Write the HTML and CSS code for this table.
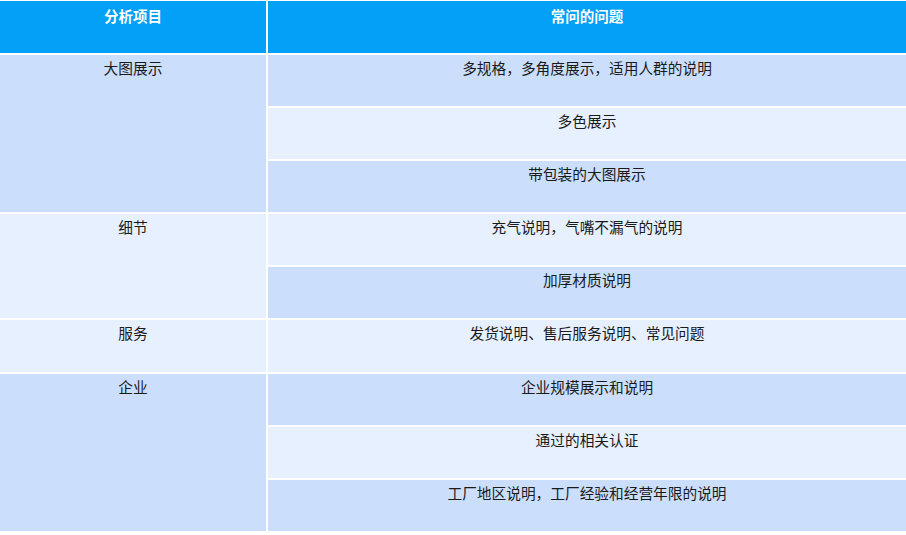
FILE: index.html
```html
<!DOCTYPE html>
<html lang="zh">
<head>
<meta charset="utf-8">
<title>分析项目</title>
<link rel="stylesheet" href="styles.css">
</head>
<body>
<div class="grid">
  <div class="cell head">分析项目</div>
  <div class="cell head">常问的问题</div>

  <div class="cell dark span3">大图展示</div>
  <div class="cell dark">多规格，多角度展示，适用人群的说明</div>
  <div class="cell light">多色展示</div>
  <div class="cell dark">带包装的大图展示</div>

  <div class="cell light span2">细节</div>
  <div class="cell light">充气说明，气嘴不漏气的说明</div>
  <div class="cell dark">加厚材质说明</div>

  <div class="cell light">服务</div>
  <div class="cell light">发货说明、售后服务说明、常见问题</div>

  <div class="cell dark span3">企业</div>
  <div class="cell dark">企业规模展示和说明</div>
  <div class="cell light">通过的相关认证</div>
  <div class="cell dark">工厂地区说明，工厂经验和经营年限的说明</div>
</div>
</body>
</html>
```

FILE: styles.css
```css
html, body {
  margin: 0;
  padding: 0;
  background: #ffffff;
}
body {
  padding-top: 1px;
  font-family: "Noto Sans CJK SC", "Noto Sans", sans-serif;
}
.grid {
  display: grid;
  grid-template-columns: 266px 1fr;
  grid-template-rows: 52px repeat(9, 51.1px);
  gap: 2px;
}
.cell {
  text-align: center;
  font-size: 14.7px;
  line-height: 20px;
  padding-top: 3px;
  color: #1a1a1a;
}
.head {
  background: #02a1f7;
  color: #ffffff;
  font-weight: 700;
  font-size: 14.5px;
  padding-top: 5px;
}
.dark { background: #cbdffd; }
.light { background: #e6f0fe; }
.span3 { grid-row: span 3; }
.span2 { grid-row: span 2; }
```
